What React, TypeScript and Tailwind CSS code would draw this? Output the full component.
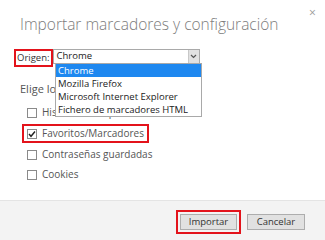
export default function App() {
  const items = [
    { label: "Historial de exploración", checked: false },
    { label: "Favoritos/Marcadores", checked: true, marked: true },
    { label: "Contraseñas guardadas", checked: false },
    { label: "Cookies", checked: false },
  ];
  const options = ["Chrome", "Mozilla Firefox", "Microsoft Internet Explorer", "Fichero de marcadores HTML"];

  return (
    <div className="relative w-[325px] h-[240px] bg-white overflow-hidden flex flex-col font-['Open_Sans',sans-serif]">
      {/* close */}
      <span className="absolute left-[309px] top-[6px] text-[12px] leading-[14px] text-[#9a9a9a]">×</span>

      <div className="flex-1 flex flex-col">
        <h1 className="pl-[20px] pt-[15px] text-[15.5px] leading-[19px] font-light text-[#7c7c7c]">
          Importar marcadores y configuración
        </h1>

        {/* source row */}
        <div className="relative flex items-start pl-[14px] mt-[15px]">
          <div className="border-2 border-[#e3131b] h-[18px] px-[1px] flex items-center text-[9.5px] text-[#333]">
            Origen:
          </div>
          <div className="w-[147px] h-[15px] border border-[#a9a9a9] flex items-center justify-between pl-[3px]">
            <span className="text-[9.5px] text-[#222]">Chrome</span>
            <span className="w-[11px] h-[13px] bg-[#e1e1e1] border-l border-[#c8c8c8] flex items-center justify-center">
              <svg width="7" height="5" viewBox="0 0 7 5">
                <path d="M1 1 L3.5 3.5 L6 1" fill="none" stroke="#555" strokeWidth="1.2" />
              </svg>
            </span>
          </div>

          {/* dropdown list */}
          <div className="absolute left-[55px] top-[14px] z-10 w-[147px] bg-white border border-[#a9a9a9] flex flex-col text-[9.5px] leading-[13px] text-[#222]">
            {options.map((o, i) => (
              <div key={o} className={i === 0 ? "bg-[#1e88f0] text-white px-[2px] h-[13px]" : "px-[2px] h-[13px]"}>
                {o}
              </div>
            ))}
          </div>
        </div>

        <p className="pl-[20px] mt-[15px] text-[11px] leading-[14px] text-[#555]">Elige lo que quieres importar</p>

        <div className="flex flex-col gap-[3px] mt-[8px] pl-[22px]">
          {items.map((it) => (
            <div key={it.label} className="flex">
              <div
                className={
                  it.marked
                    ? "flex items-center gap-[5px] border-2 border-[#e3131b] px-[3px] h-[19px]"
                    : "flex items-center gap-[5px] border-2 border-transparent px-[3px] h-[17px]"
                }
              >
                <span className="w-[10px] h-[10px] border border-[#8a8a8a] bg-white flex items-center justify-center">
                  {it.checked && (
                    <svg width="8" height="8" viewBox="0 0 8 8">
                      <path d="M1 4 L3 6.3 L7 1.5" fill="none" stroke="#222" strokeWidth="1.4" />
                    </svg>
                  )}
                </span>
                <span className="text-[10px] text-[#555]">{it.label}</span>
              </div>
            </div>
          ))}
        </div>
      </div>

      {/* footer */}
      <div className="h-[40px] bg-[#f3f3f3] border-t border-[#e4e4e4] flex items-start justify-end gap-[6px] pr-[20px] pt-[9px]">
        <div className="flex border-2 border-[#e3131b] p-[2px]">
          <button className="w-[57px] h-[16px] bg-[#e1e1e1] border border-[#adadad] text-[9.5px] leading-[14px] text-[#333]">
            Importar
          </button>
        </div>
        <button className="mt-[4px] w-[58px] h-[16px] bg-[#e1e1e1] border border-[#adadad] text-[9.5px] leading-[14px] text-[#333]">
          Cancelar
        </button>
      </div>
    </div>
  );
}
